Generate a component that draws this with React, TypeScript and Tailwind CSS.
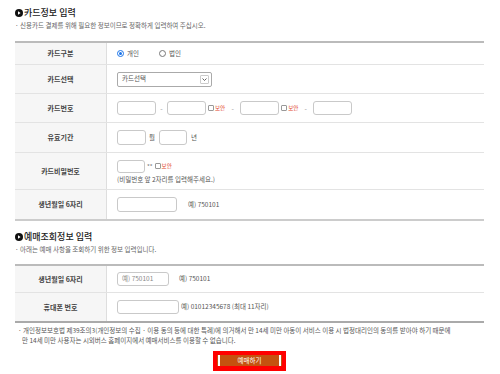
import type { ReactNode } from 'react'

function Bullet() {
  return (
    <svg width="8" height="8" viewBox="0 0 8 8" className="shrink-0">
      <circle cx="4" cy="4" r="4" fill="#111" />
      <path d="M3 2.2 L5.6 4 L3 5.8 Z" fill="#fff" />
    </svg>
  )
}

function SectionTitle({ title, desc }: { title: string; desc: string }) {
  return (
    <div>
      <div className="flex items-center gap-[1px] h-[11px] text-[9px] leading-[11px] text-[#222] font-medium">
        <Bullet />
        <span>{title}</span>
      </div>
      <p className="mt-[3px] text-[6.5px] leading-[8px] text-[#666]">· {desc}</p>
    </div>
  )
}

function Row({ label, h, children, last }: { label: string; h: string; children: ReactNode; last?: boolean }) {
  return (
    <div className={`flex ${h} ${last ? '' : 'border-b border-[#e3e3e3]'}`}>
      <div className="w-[92px] shrink-0 bg-[#f6f6f6] border-r border-[#dedede] flex items-center justify-center text-[7px] font-bold text-[#444]">
        {label}
      </div>
      <div className="flex-1 flex items-center pl-[10px] text-[6.5px] text-[#555]">{children}</div>
    </div>
  )
}

function Box({ w, h = 'h-[14px]', placeholder }: { w: string; h?: string; placeholder?: string }) {
  return (
    <div className={`${w} ${h} shrink-0 bg-white border border-[#c9c9c9] rounded-[3px] flex items-center pl-[4px] text-[6.5px] text-[#888]`}>
      {placeholder}
    </div>
  )
}

function Secure() {
  return (
    <span className="flex items-center ml-[2px]">
      <span className="w-[6px] h-[6px] border border-[#999] rounded-[1px] bg-white" />
      <span className="ml-[1px] text-[5.5px] text-[#e2452a]">보안</span>
    </span>
  )
}

function Dash({ w }: { w: string }) {
  return <span className={`${w} text-center text-[#999] text-[7px]`}>-</span>
}

export default function App() {
  return (
    <div className="w-[500px] h-[374px] overflow-hidden bg-white font-['Noto_Sans_CJK_KR',sans-serif] text-[#555]">
      <div className="pl-[15px] pr-[16px] pt-[7px]">
        <SectionTitle
          title="카드정보 입력"
          desc="신용카드 결제를 위해 필요한 정보이므로 정확하게 입력하여 주십시오."
        />

        <div className="mt-[12px] border-t-2 border-b-2 border-t-[#bbbbbb] border-b-[#cccccc]">
          <Row label="카드구분" h="h-[22px]">
            <span className="flex items-center">
              <span className="w-[7px] h-[7px] rounded-full border border-[#1a73e8] flex items-center justify-center bg-white">
                <span className="w-[3.5px] h-[3.5px] rounded-full bg-[#1a73e8]" />
              </span>
              <span className="ml-[3px]">개인</span>
            </span>
            <span className="flex items-center ml-[20px]">
              <span className="w-[7px] h-[7px] rounded-full border border-[#777] bg-white" />
              <span className="ml-[3px]">법인</span>
            </span>
          </Row>

          <Row label="카드선택" h="h-[29px]">
            <div className="w-[95px] h-[15px] border border-[#aaa] rounded-[2px] bg-white flex items-center justify-between pl-[4px] pr-[2px]">
              <span className="text-[6.5px] text-[#555]">카드선택</span>
              <span className="w-[9px] h-[9px] border border-[#ccc] rounded-[1px] flex items-center justify-center">
                <svg width="5" height="3" viewBox="0 0 5 3">
                  <path d="M0.5 0.5 L2.5 2.5 L4.5 0.5" fill="none" stroke="#555" strokeWidth="0.9" />
                </svg>
              </span>
            </div>
          </Row>

          <Row label="카드번호" h="h-[29px]">
            <Box w="w-[39px]" />
            <Dash w="w-[11px]" />
            <Box w="w-[39px]" />
            <Secure />
            <Dash w="w-[15px]" />
            <Box w="w-[39px]" />
            <Secure />
            <Dash w="w-[15px]" />
            <Box w="w-[39px]" />
          </Row>

          <Row label="유효기간" h="h-[30px]">
            <Box w="w-[29px]" h="h-[15px]" />
            <span className="ml-[3px] w-[10px]">월</span>
            <Box w="w-[28px]" h="h-[15px]" />
            <span className="ml-[4px]">년</span>
          </Row>

          <Row label="카드비밀번호" h="h-[37px]">
            <div className="flex flex-col">
              <div className="flex items-center">
                <Box w="w-[28px]" h="h-[13px]" />
                <span className="ml-[2px] text-[6px] text-[#777]">**</span>
                <Secure />
              </div>
              <span className="mt-[2px] leading-[8px]">(비밀번호 앞 2자리를 입력해주세요.)</span>
            </div>
          </Row>

          <Row label="생년월일 6자리" h="h-[29px]" last>
            <Box w="w-[60px]" h="h-[15px]" />
            <span className="ml-[11px]">예) 750101</span>
          </Row>
        </div>

        <div className="mt-[10px]">
          <SectionTitle title="예매조회정보 입력" desc="아래는 예매 사항을 조회하기 위한 정보 입력입니다." />
        </div>

        <div className="mt-[11px] border-t-2 border-b-2 border-t-[#bbbbbb] border-b-[#aaaaaa]">
          <Row label="생년월일 6자리" h="h-[27px]">
            <Box w="w-[52px]" h="h-[14px]" placeholder="예) 750101" />
            <span className="ml-[10px]">예) 750101</span>
          </Row>
          <Row label="휴대폰 번호" h="h-[28px]" last>
            <Box w="w-[62px]" h="h-[14px]" />
            <span className="ml-[2px]">예) 01012345678 (최대 11자리)</span>
          </Row>
        </div>

        <div className="mt-[2px] pl-[3px] text-[6.5px] leading-[10px] text-[#555]">
          <p>· 개인정보보호법 제39조의3(개인정보의 수집 · 이용 동의 등에 대한 특례)에 의거해서 만 14세 미만 아동이 서비스 이용 시 법정대리인의 동의를 받아야 하기 때문에</p>
          <p className="pl-[4px]">만 14세 미만 사용자는 시외버스 홈페이지에서 예매서비스를 이용할 수 없습니다.</p>
        </div>

        <div className="mt-[6px] flex justify-center">
          <div className="w-[73px] h-[20px] bg-[#ff0000] p-[4px] pb-[5px]">
            <div className="h-full bg-[#c5520f] px-[1px]">
              <div className="h-full border-l-2 border-r-2 border-white flex items-center justify-center text-[6.5px] text-white">
                예매하기
              </div>
            </div>
          </div>
        </div>
      </div>
    </div>
  )
}
